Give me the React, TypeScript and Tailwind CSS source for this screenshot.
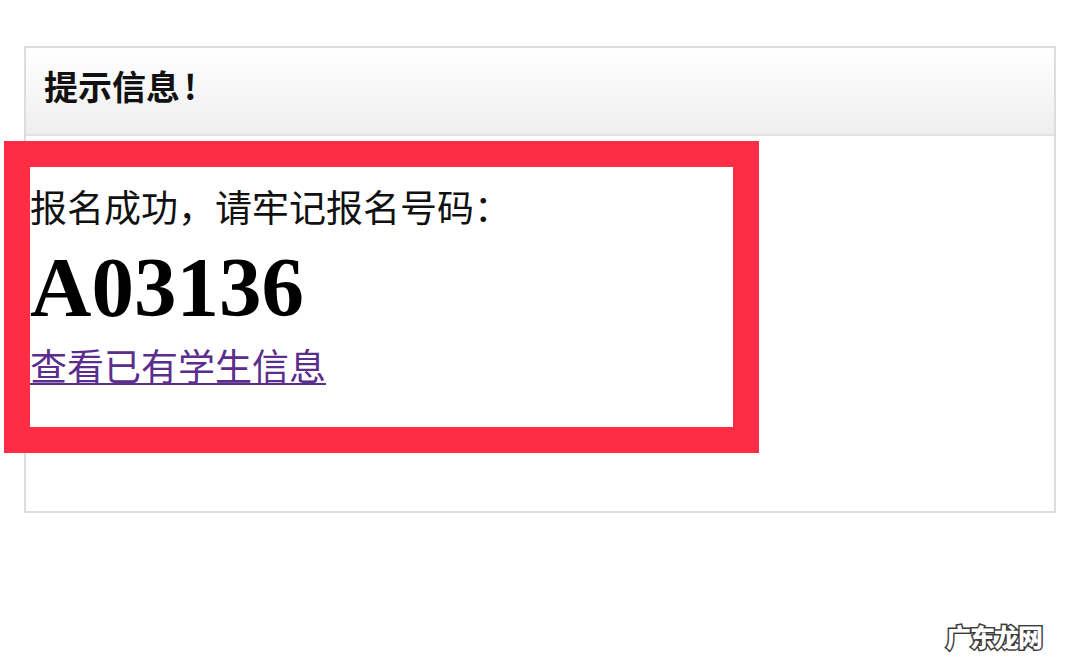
export default function App() {
  return (
    <div className="relative w-[1080px] h-[665px] bg-white overflow-hidden font-['Noto_Sans_CJK_SC',sans-serif]">
      {/* Message panel */}
      <div className="ml-[24px] pt-[46px]">
        <div className="w-[1032px] h-[467px] border-2 border-[#dddddd] flex flex-col">
          <div className="h-[88px] flex items-center pl-[18px] pb-[10px] border-b-2 border-[#e2e2e2] bg-gradient-to-b from-white to-[#eeeeee]">
            <h1 className="text-[34px] leading-[40px] font-bold text-[#111]">
              提示信息<span className="ml-[4px]">!</span>
            </h1>
          </div>
          <div className="pl-[4px] pt-[43px]">
            <p className="text-[37px] leading-[54px] text-[#111]">报名成功，请牢记报名号码：</p>
            <p className="mt-[9px] text-[85px] leading-[90px] font-bold text-black font-['Liberation_Serif',serif]">
              A03136
            </p>
            <a
              href="#"
              className="inline-block mt-[11px] text-[37px] leading-[44px] text-[#5b2d8c] underline underline-offset-[2px] decoration-[2px]"
            >
              查看已有学生信息
            </a>
          </div>
        </div>
      </div>

      {/* Red annotation box */}
      <div className="absolute left-[4px] top-[141px] w-[755px] h-[312px] border-[26px] border-[#fe2c45] pointer-events-none" />

      {/* Watermark */}
      <div className="absolute left-[946px] top-[620px] text-[25px] leading-[32px] font-black tracking-[-1px] text-white [-webkit-text-stroke:3px_#3a3a3a] [paint-order:stroke_fill]">
        广东龙网
      </div>
    </div>
  );
}
